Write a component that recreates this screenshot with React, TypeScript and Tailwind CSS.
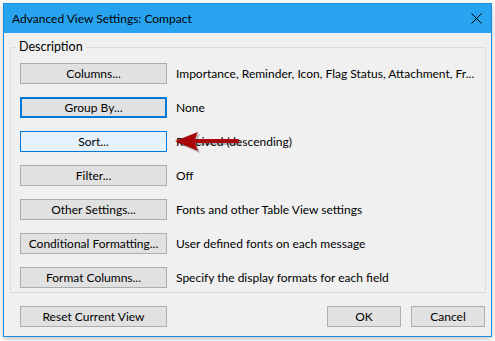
const ROWS: { label: string; text: string; state?: "default" | "hover" }[] = [
  { label: "Columns...", text: "Importance, Reminder, Icon, Flag Status, Attachment, Fr..." },
  { label: "Group By...", text: "None", state: "default" },
  { label: "Sort...", text: "Received (descending)", state: "hover" },
  { label: "Filter...", text: "Off" },
  { label: "Other Settings...", text: "Fonts and other Table View settings" },
  { label: "Conditional Formatting...", text: "User defined fonts on each message" },
  { label: "Format Columns...", text: "Specify the display formats for each field" },
];

function DlgButton({
  label,
  state,
  className = "",
}: {
  label: string;
  state?: "default" | "hover";
  className?: string;
}) {
  let look = "bg-[#e1e1e1] border border-[#adadad]";
  if (state === "default") look = "bg-[#e1e1e1] border-2 border-[#0078d7]";
  if (state === "hover") look = "bg-[#e5f1fb] border border-[#0078d7]";
  return (
    <button
      className={`h-[21px] flex items-center justify-center text-[12px] leading-none text-black ${look} ${className}`}
    >
      {label}
    </button>
  );
}

// annotation arrow pointing at the Sort row
function RedArrow() {
  return (
    <svg
      className="absolute left-[170px] top-[127px]"
      width="75"
      height="30"
      viewBox="0 0 75 30"
    >
      <g transform="translate(2 2)" fill="#000" opacity="0.25">
        <polygon points="5,14 28,5 25,12 69,12 69,16 25,16 28,24" />
      </g>
      <polygon points="5,14 28,5 25,12 69,12 69,16 25,16 28,24" fill="#a8080a" />
    </svg>
  );
}

export default function App() {
  return (
    <div className="relative w-[495px] h-[341px] bg-white pt-[3px] pl-[3px] font-['Lato',sans-serif]">
      <div className="w-[489px] h-[334px] border border-[#1b8fde] bg-[#f0f0f0] flex flex-col shadow-[0_2px_6px_rgba(0,0,0,0.25)]">
        {/* title bar */}
        <div className="h-[29px] bg-[#27a3ef] flex items-center pl-[8px] pr-[9px] text-[12px] text-black">
          <span>Advanced View Settings: Compact</span>
          <svg className="ml-auto" width="11" height="11" viewBox="0 0 11 11">
            <path d="M0.5 0.5 L10.5 10.5 M10.5 0.5 L0.5 10.5" stroke="#000" strokeWidth="1" />
          </svg>
        </div>

        <fieldset className="mt-[6px] ml-[6px] mr-[5px] border border-[#dcdcdc] pl-[9px] pt-[8px] pb-[4px] flex flex-col gap-[13px]">
          <legend className="ml-[-4px] px-[3px] text-[12.5px] leading-[16px] text-black">
            Description
          </legend>
          {ROWS.map((r) => (
            <div key={r.label} className="flex items-center">
              <DlgButton label={r.label} state={r.state} className="w-[147px]" />
              <span className="ml-[9px] text-[12px] text-black whitespace-nowrap">{r.text}</span>
            </div>
          ))}
        </fieldset>

        <div className="mt-[13px] flex items-center pl-[16px] pr-[6px]">
          <DlgButton label="Reset Current View" className="w-[147px]" />
          <div className="ml-auto flex gap-[10px]">
            <DlgButton label="OK" className="w-[74px]" />
            <DlgButton label="Cancel" className="w-[74px]" />
          </div>
        </div>
      </div>
      <RedArrow />
    </div>
  );
}
